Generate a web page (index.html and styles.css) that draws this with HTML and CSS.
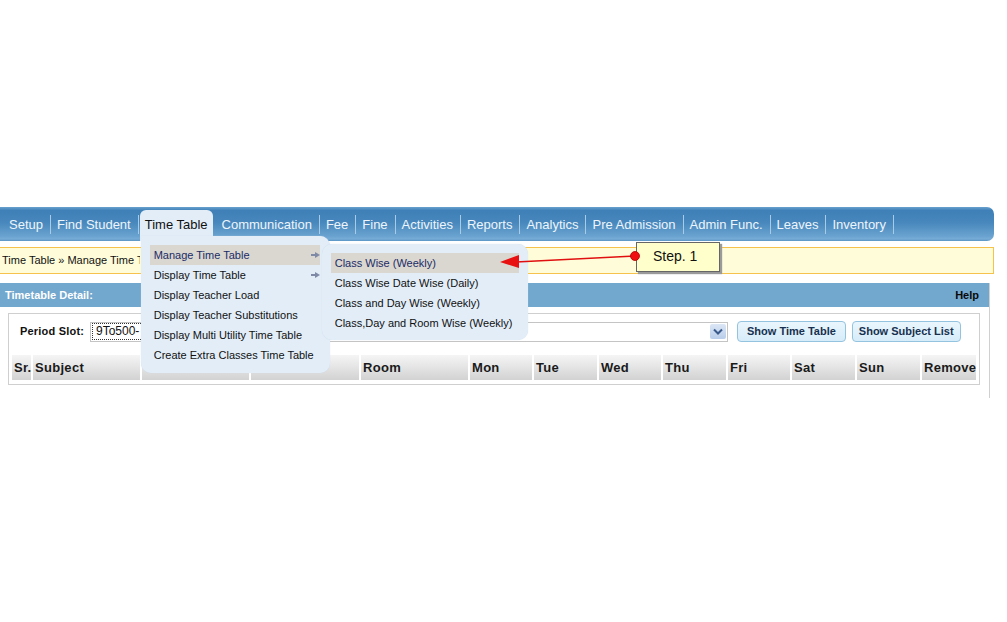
FILE: index.html
```html
<!DOCTYPE html>
<html>
<head>
<meta charset="utf-8">
<link rel="stylesheet" href="styles.css">
</head>
<body>
<div class="page">
  <ul class="nav">
    <li class="nav-item">Setup</li>
    <li class="nav-item">Find Student</li>
    <li class="nav-tab">Time Table
      <div class="menu">
        <div class="menu-item hl">Manage Time Table<span class="arr"></span></div>
        <div class="menu-item">Display Time Table<span class="arr"></span></div>
        <div class="menu-item">Display Teacher Load</div>
        <div class="menu-item">Display Teacher Substitutions</div>
        <div class="menu-item">Display Multi Utility Time Table</div>
        <div class="menu-item">Create Extra Classes Time Table</div>
        <div class="submenu">
          <div class="sub-item hl">Class Wise (Weekly)</div>
          <div class="sub-item">Class Wise Date Wise (Daily)</div>
          <div class="sub-item">Class and Day Wise (Weekly)</div>
          <div class="sub-item">Class,Day and Room Wise (Weekly)</div>
        </div>
      </div>
    </li>
    <li class="nav-item">Communication</li>
    <li class="nav-item">Fee</li>
    <li class="nav-item">Fine</li>
    <li class="nav-item">Activities</li>
    <li class="nav-item">Reports</li>
    <li class="nav-item">Analytics</li>
    <li class="nav-item">Pre Admission</li>
    <li class="nav-item">Admin Func.</li>
    <li class="nav-item">Leaves</li>
    <li class="nav-item">Inventory</li>
  </ul>

  <div class="crumb"><span class="crumb-text">Time Table » Manage Time Table</span></div>

  <div class="panel">
    <div class="panel-head"><span>Timetable Detail:</span><span class="help">Help</span></div>
    <div class="panel-body">
      <div class="box">
        <div class="form-row">
          <span class="label">Period Slot:</span>
          <div class="select"><span class="sel-val">9To500-</span><span class="sel-btn"><svg width="10" height="7" viewBox="0 0 10 7"><path d="M1 1.5 L5 5.5 L9 1.5" fill="none" stroke="#3a5a8c" stroke-width="2"/></svg></span></div>
          <button class="btn">Show Time Table</button>
          <button class="btn btn-2">Show Subject List</button>
        </div>
        <div class="thead">
          <div class="th">Sr.</div>
          <div class="th">Subject</div>
          <div class="th"></div>
          <div class="th"></div>
          <div class="th">Room</div>
          <div class="th">Mon</div>
          <div class="th">Tue</div>
          <div class="th">Wed</div>
          <div class="th">Thu</div>
          <div class="th">Fri</div>
          <div class="th">Sat</div>
          <div class="th">Sun</div>
          <div class="th">Remove</div>
        </div>
      </div>
    </div>
  </div>

  <div class="callout">Step. 1</div>
  <svg class="pointer" width="150" height="24" viewBox="0 0 150 24">
    <line x1="137" y1="8" x2="18" y2="14" stroke="#e01010" stroke-width="1.3"/>
    <polygon points="2,14 21,7 21,20" fill="#e81010"/>
    <circle cx="137" cy="8" r="4.5" fill="#f01010" stroke="#b00000" stroke-width="0.8"/>
  </svg>
</div>
</body>
</html>
```

FILE: styles.css
```css
html, body {
  margin: 0;
  padding: 0;
  background: #ffffff;
  font-family: "Liberation Sans", Arial, sans-serif;
}

.page {
  position: relative;
  width: 1007px;
  height: 622px;
  padding-top: 207px;
  box-sizing: border-box;
}

.nav {
  list-style: none;
  margin: 0;
  padding: 0 0 0 2px;
  width: 994px;
  height: 34px;
  box-sizing: border-box;
  display: flex;
  align-items: stretch;
  border-radius: 0 7px 7px 0;
  background: linear-gradient(to bottom, #6aa2cf 0%, #3e80b7 10%, #4787bc 45%, #69a2cf 85%, #76acd6 94%, #5a95c4 100%);
}

.nav-item {
  display: flex;
  align-items: center;
  padding: 0 7px;
  height: 34px;
  font-size: 13px;
  color: #eef5fb;
  position: relative;
}

.nav-item::after {
  content: "";
  position: absolute;
  right: -1px;
  top: 8px;
  height: 19px;
  width: 1px;
  background: #a8cbe6;
}

.nav-tab {
  position: relative;
  margin: 3px 2px 0 2px;
  padding: 0 5px;
  height: 31px;
  display: flex;
  align-items: center;
  padding-bottom: 2px;
  box-sizing: border-box;
  font-size: 13px;
  color: #111;
  background: #e2edf8;
  border-radius: 6px 6px 0 0;
  z-index: 5;
}

.menu {
  position: absolute;
  left: 1px;
  top: 26px;
  width: 189px;
  height: 137px;
  box-sizing: border-box;
  padding: 9px 0 0 9px;
  background: #e2edf8;
  border-radius: 0 10px 10px 10px;
  box-shadow: 0 0 1px #c8d8e8;
}

.menu-item {
  position: relative;
  width: 170px;
  height: 20px;
  line-height: 20px;
  padding-left: 4px;
  box-sizing: border-box;
  font-size: 11px;
  color: #111;
  white-space: nowrap;
}

.menu-item.hl {
  background: #dad6d0;
  color: #1b2d66;
}

.arr {
  position: absolute;
  right: 0;
  top: 7px;
  width: 0;
  height: 0;
  border-left: 5px solid #7f8aa6;
  border-top: 3px solid transparent;
  border-bottom: 3px solid transparent;
}

.arr::before {
  content: "";
  position: absolute;
  left: -9px;
  top: -1px;
  width: 5px;
  height: 2px;
  background: #7f8aa6;
}

.submenu {
  position: absolute;
  left: 181px;
  top: 8px;
  width: 206px;
  height: 96px;
  box-sizing: border-box;
  padding: 9px 0 0 9px;
  background: #e2edf8;
  border-radius: 10px;
  box-shadow: 0 0 1px #c8d8e8;
}

.sub-item {
  width: 188px;
  height: 20px;
  line-height: 20px;
  padding-left: 4px;
  box-sizing: border-box;
  font-size: 11px;
  color: #111;
  white-space: nowrap;
}

.sub-item.hl {
  background: #dad6d0;
  color: #1b2d66;
}

.crumb {
  margin-top: 6px;
  width: 994px;
  height: 27px;
  box-sizing: border-box;
  border: 1px solid #f6c24c;
  border-left: none;
  background: #fffdd9;
  padding-left: 2px;
  font-size: 11px;
  line-height: 25px;
  color: #111;
  white-space: nowrap;
}

.crumb-text {
  display: inline-block;
  width: 138px;
  overflow: hidden;
  vertical-align: top;
}

.panel {
  margin-top: 9px;
  width: 989px;
  border-right: 1px solid #d0d0d0;
}

.panel-head {
  height: 24px;
  background: #72a7ce;
  display: flex;
  justify-content: space-between;
  align-items: center;
  padding: 0 10px 0 5px;
  font-size: 11px;
  font-weight: bold;
  color: #ffffff;
}

.panel-head .help {
  color: #0a0a0a;
}

.panel-body {
  padding: 6px 8px 13px 8px;
}

.box {
  width: 972px;
  height: 72px;
  box-sizing: border-box;
  border: 1px solid #cfcfcf;
  padding: 6px 3px 0 3px;
}

.form-row {
  display: flex;
  align-items: center;
  height: 22px;
  padding-left: 8px;
}

.label {
  font-size: 11px;
  font-weight: bold;
  color: #111;
  width: 70px;
  letter-spacing: 0.2px;
}

.select {
  width: 638px;
  height: 20px;
  box-sizing: border-box;
  border: 1px solid #c4c4c4;
  display: flex;
  align-items: center;
  justify-content: space-between;
  padding: 0 1px 0 1px;
  margin-top: 1px;
}

.sel-val {
  font-size: 12px;
  color: #111;
  border: 1px dotted #333;
  height: 15px;
  line-height: 15px;
  padding: 0 3px 0 3px;
}

.sel-btn {
  width: 16px;
  height: 15px;
  background: linear-gradient(#dbe6f5, #b9cdea);
  border-radius: 2px;
  display: flex;
  align-items: center;
  justify-content: center;
}

.btn {
  margin-left: 9px;
  height: 21px;
  padding: 0 9px;
  font-family: "Liberation Sans", Arial, sans-serif;
  font-size: 11px;
  font-weight: bold;
  color: #17304f;
  background: linear-gradient(#eaf6fd, #d6ecf9);
  border: 1px solid #93c3df;
  border-radius: 4px;
}

.btn.btn-2 {
  margin-left: 6px;
  padding: 0 6px;
}

.thead {
  margin-top: 13px;
  display: grid;
  grid-template-columns: 19px 107px 107px 108px 107px 62px 63px 62px 63px 62px 63px 63px 54px;
  column-gap: 2px;
  height: 25px;
}

.th {
  background: linear-gradient(to bottom, #f5f5f5 0%, #e4e4e4 50%, #d2d2d2 100%);
  font-size: 13px;
  font-weight: bold;
  color: #1a1a1a;
  line-height: 25px;
  padding-left: 2px;
  letter-spacing: 0.3px;
  white-space: nowrap;
  overflow: hidden;
}

.callout {
  position: absolute;
  left: 636px;
  top: 242px;
  width: 84px;
  height: 30px;
  box-sizing: border-box;
  background: #ffffcc;
  border: 1px solid #666;
  box-shadow: 2px 2px 1px #9a9a9a;
  font-size: 14px;
  color: #111;
  padding-left: 16px;
  line-height: 27px;
  z-index: 20;
}

.pointer {
  position: absolute;
  left: 498px;
  top: 248px;
  overflow: visible;
  z-index: 30;
}
```
